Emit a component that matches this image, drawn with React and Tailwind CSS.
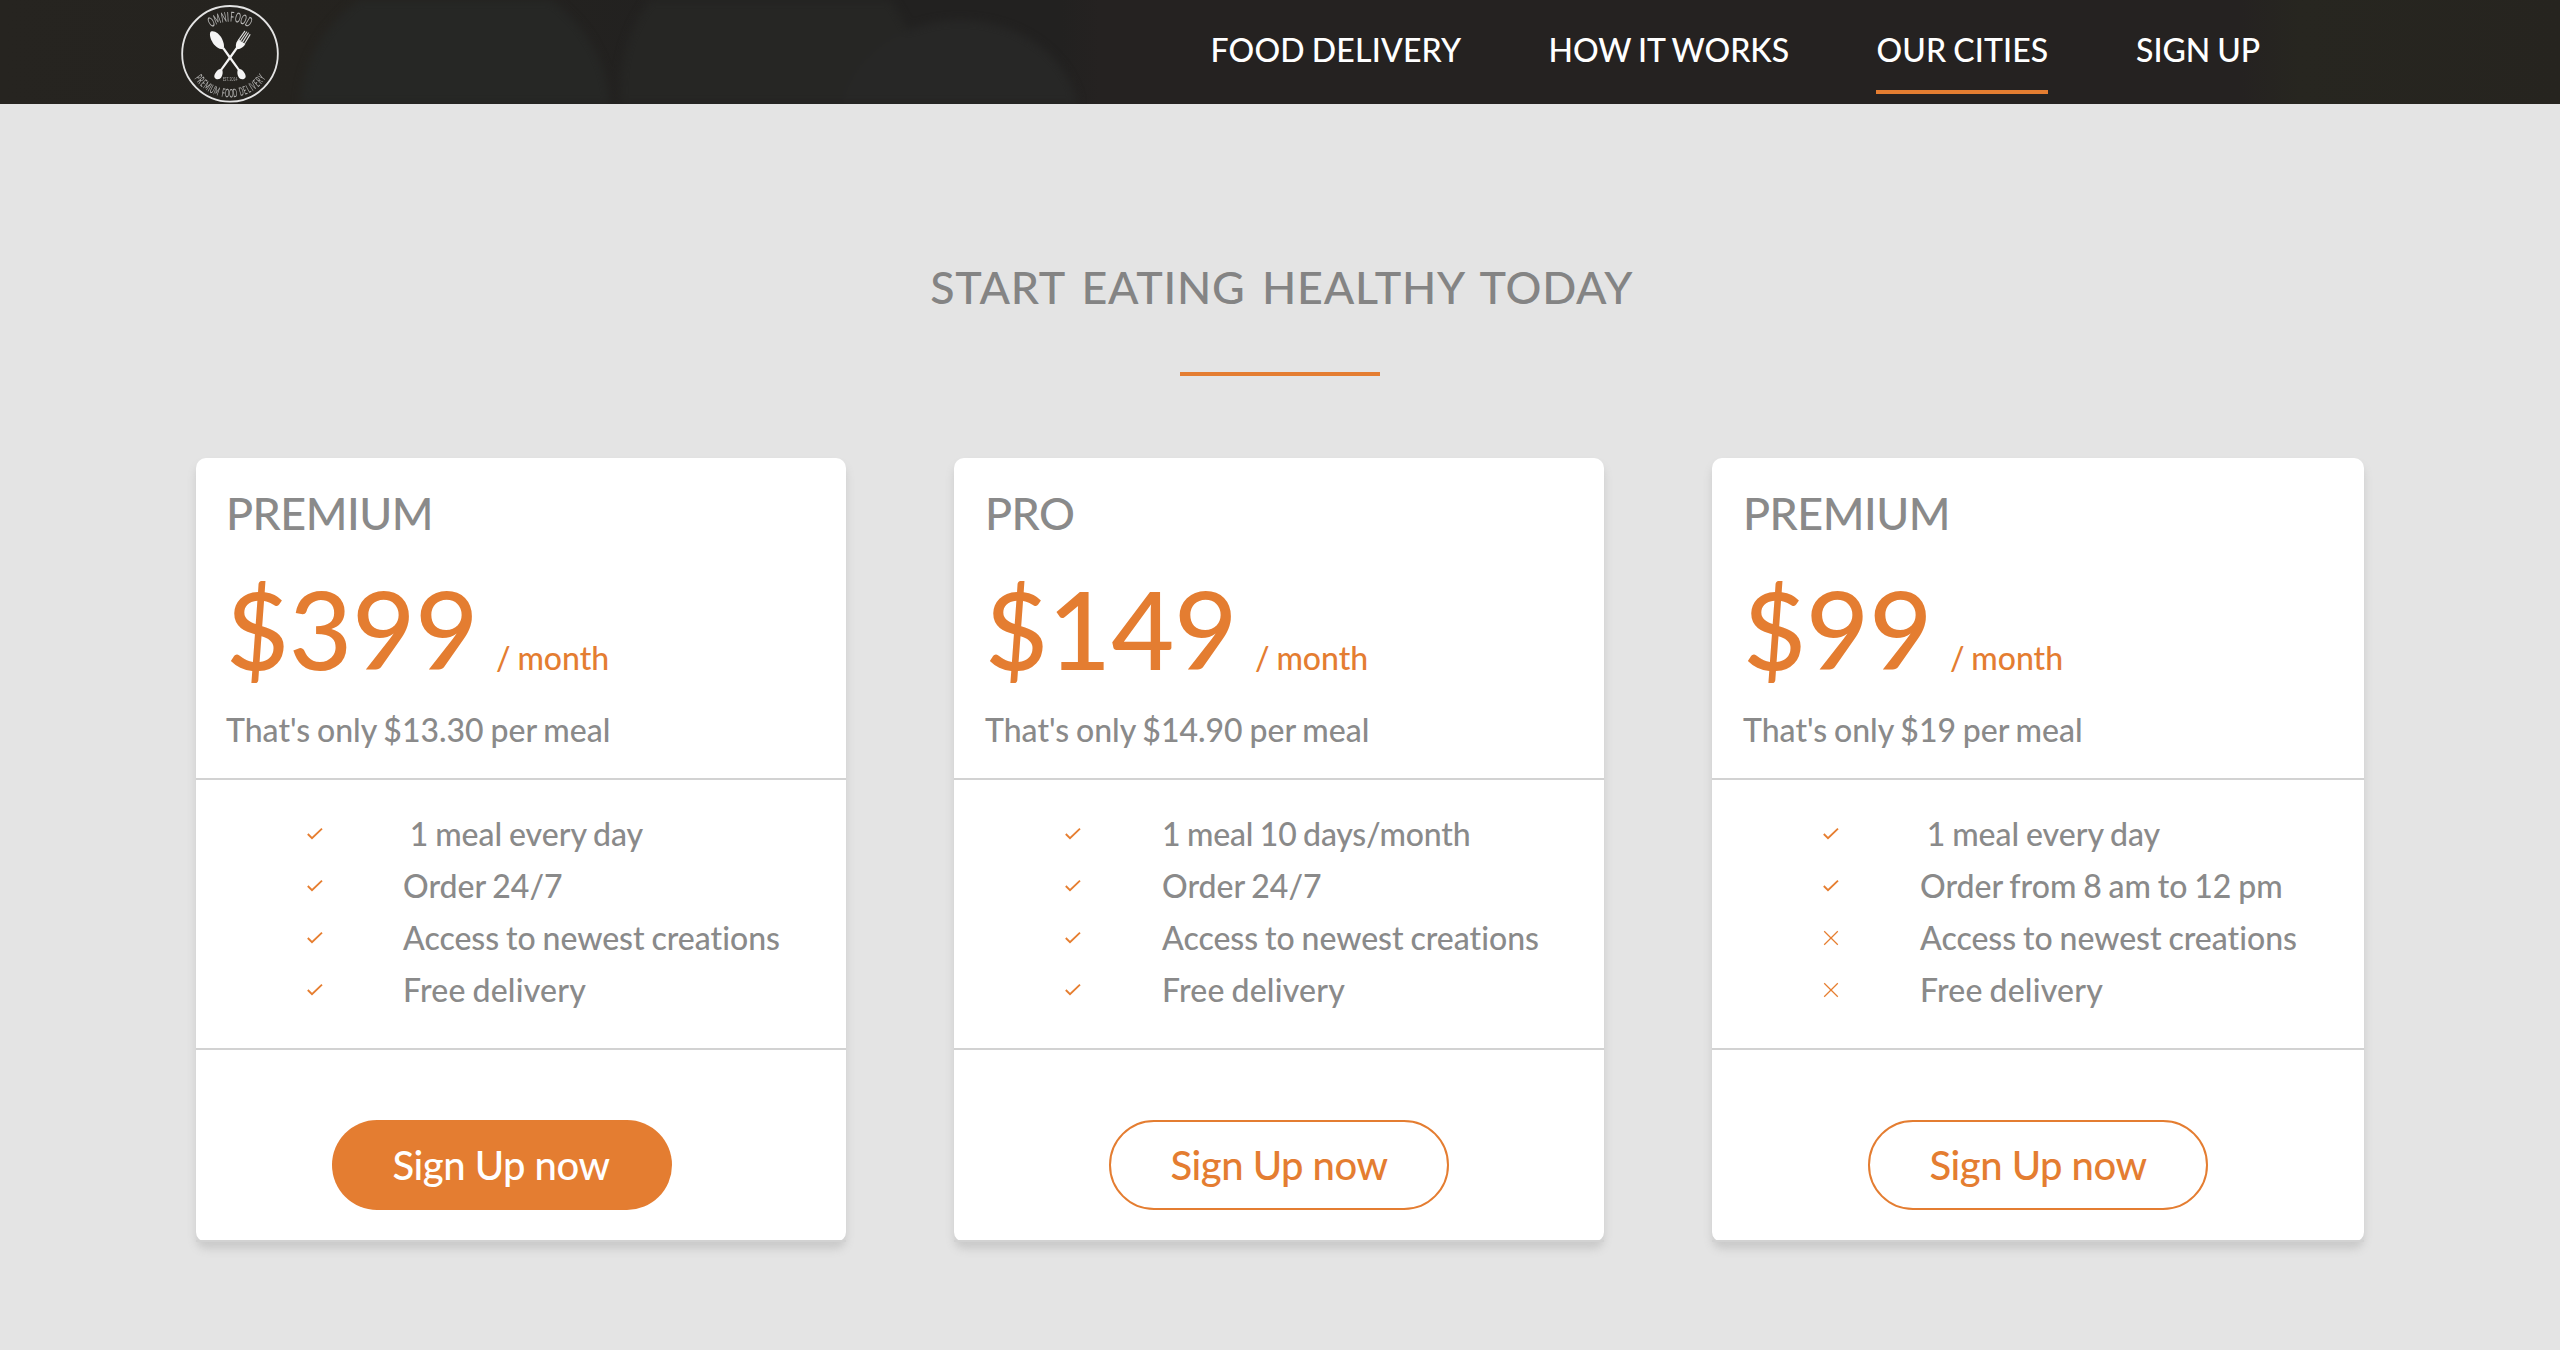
import React from "react";

const NAV = [
  { label: "FOOD DELIVERY", box: "w-[249px] tracking-[0.19px]" },
  { label: "HOW IT WORKS", box: "w-[240.5px] pl-[1px]" },
  { label: "OUR CITIES", box: "w-[172px] pl-[0.5px] tracking-[0.12px]", active: true },
  { label: "SIGN UP", box: "w-[125px]" },
];

const PLANS = [
  {
    name: "PREMIUM",
    price: "$399",
    note: "That's only $13.30 per meal",
    features: [
      ["\u00a01 meal every day", true],
      ["Order 24/7", true],
      ["Access to newest creations", true],
      ["Free delivery", true],
    ],
    inset: "px-[30px]",
    markGap: "mr-[79px]",
    filled: true,
  },
  {
    name: "PRO",
    price: "$149",
    note: "That's only $14.90 per meal",
    features: [
      ["1 meal 10 days/month", true, "tracking-[-0.2px]"],
      ["Order 24/7", true],
      ["Access to newest creations", true],
      ["Free delivery", true],
    ],
    inset: "px-[31px]",
    markGap: "mr-[80px]",
  },
  {
    name: "PREMIUM",
    price: "$99",
    note: "That's only $19 per meal",
    features: [
      ["\u00a01 meal every day", true],
      ["Order from 8 am to 12 pm", true],
      ["Access to newest creations", false],
      ["Free delivery", false],
    ],
    inset: "px-[31px]",
    markGap: "mr-[80px]",
  },
];

const GLYPH_WIDTH = { I: 0.5, M: 1.3, " ": 0.6 };

// Letters spread along a circle; "span" is the total angle in degrees.
function ArcText({ text, span, radius, size, squeeze, below }) {
  const widths = [...text].map((ch) => GLYPH_WIDTH[ch] || 1);
  const total = widths.reduce((a, b) => a + b, 0);
  let passed = 0;
  return [...text].map((ch, i) => {
    const at = (passed + widths[i] / 2) / total - 0.5;
    passed += widths[i];
    const angle = at * span * (below ? -1 : 1);
    const y = below ? radius : -radius;
    return (
      <text
        key={i}
        fontSize={size}
        textAnchor="middle"
        transform={`translate(210 162) rotate(${angle}) translate(0 ${y}) scale(${squeeze} 1)`}
      >
        {ch}
      </text>
    );
  });
}

function Logo() {
  return (
    <svg viewBox="60 12 300 300" className="size-[100px]" fill="#f4f4f4" fontFamily="Lato, sans-serif" fontWeight="400">
      <circle cx="210" cy="161.5" r="143.5" fill="none" stroke="#e4e4e4" strokeWidth="5.5" />
      <g opacity="0.72">
        <ArcText text="OMNIFOOD" span={70} radius={97} size={41} squeeze={0.5} />
        <ArcText text="PREMIUM FOOD DELIVERY" span={113} radius={130} size={35} squeeze={0.46} below />
      </g>
      <path d="M152 95 C162 90 178 100 186 116 C191 127 194 138 191 145 L188 148 C177 148 162 138 156 124 C150 112 148 100 152 95 Z" />
      <path d="M186 145 L192 142 L213 171 L238 206 C248 208 258 221 257 231 C254 240 240 240 236 232 C232 225 231 218 233 210 L207 175 Z" />
      <path d="M234 145 L228 142 L207 171 L182 206 C172 208 162 221 163 231 C166 240 180 240 184 232 C188 225 189 218 187 210 L213 175 Z" />
      <path d="M228 144 C226 132 230 124 236 118 L243 124 L256 132 C252 140 242 147 233 148 Z" />
      <path
        d="M235 121 L254 94 M241 124 L260 96 M247 128 L265 99 M253 132 L270 104"
        fill="none"
        stroke="#dcdcdc"
        strokeWidth="3.4"
        strokeLinecap="round"
      />
      <text x="210" y="242" fontSize="17" textAnchor="middle" textLength="44" lengthAdjust="spacingAndGlyphs" opacity="0.6">
        EST. 2014
      </text>
    </svg>
  );
}

function Mark({ ok }) {
  return (
    <svg viewBox="0 0 18 18" className="size-[18px]" fill="none" stroke="#e67e30">
      {ok ? (
        <path d="M1.8 9 L6 13.1 L16 3.6" strokeWidth="1.9" />
      ) : (
        <path d="M2.2 2.2 L15.8 15.8 M15.8 2.2 L2.2 15.8" strokeWidth="1.25" />
      )}
    </svg>
  );
}

function Plan({ plan }) {
  return (
    <article className="h-[784px] rounded-[10px] bg-white shadow-[0_7px_8px_#cacaca]">
      <div className={"h-[322px] border-b-2 border-[#d2d2d2] pt-[25px] " + plan.inset}>
        <h3 className="text-[44.8px] leading-[60px] tracking-[-0.5px]">{plan.name}</h3>
        <p className="mt-[25px] flex items-baseline whitespace-nowrap text-[#e47d31]">
          <span className="text-[108.8px] leading-[120px]">{plan.price}</span>
          <span className="ml-[17.6px]">/ month</span>
        </p>
        <p className="mt-[18px] leading-[48px]">{plan.note}</p>
      </div>
      <ul className="h-[270px] border-b-2 border-[#d2d2d2] pt-[28px]">
        {plan.features.map(([label, ok, spacing]) => (
          <li key={label} className="flex h-[52px] items-center leading-[52px] last:tracking-[0.2px]">
            <span className={"ml-[110px] " + plan.markGap}>
              <Mark ok={ok} />
            </span>
            <span className={"whitespace-nowrap " + (spacing || "")}>{label}</span>
          </li>
        ))}
      </ul>
      <div className="flex h-[192px] justify-center border-b-2 border-[#d2d2d2] pt-[70px]">
        <button
          className={
            plan.filled
              ? "mr-[38px] h-[90px] w-[340px] rounded-full bg-[#e47d31] pr-[2px] text-[40px] leading-[86px] tracking-[-0.5px] text-white"
              : "h-[90px] w-[340px] rounded-full border-2 border-[#e47d31] text-[40px] leading-[82px] tracking-[-0.5px] text-[#e47d31]"
          }
        >
          Sign Up now
        </button>
      </div>
    </article>
  );
}

export default function App() {
  return (
    <div className="h-[1350px] w-[2560px] overflow-hidden bg-[#e4e4e4] font-['Lato',sans-serif] text-[32px] font-medium text-[#8a8a8a] [word-spacing:-0.04em] [font-variant-ligatures:none]">
      <header className="relative flex h-[104px] justify-between overflow-hidden bg-[linear-gradient(90deg,#262420_0px,#25231f_300px,#222120_700px,#222120_1060px,#252221_1100px,#252221_2240px,#272620_2300px,#26241f_2560px)] pl-[180px] pr-[299px] text-white">
        <svg viewBox="0 0 2560 104" className="absolute inset-0 h-[104px] w-[2560px] blur-[4px]">
          <ellipse cx="455" cy="110" rx="155" ry="140" fill="#262725" />
          <ellipse cx="770" cy="90" rx="150" ry="150" fill="#262624" />
          <ellipse cx="960" cy="122" rx="120" ry="102" fill="#272726" />
        </svg>
        <div className="relative pt-1">
          <Logo />
        </div>
        <nav className="relative flex gap-[88px] pt-[26px]">
          {NAV.map((item) => (
            <a key={item.label} className={item.box + " h-[68px] whitespace-nowrap leading-[48px]" + (item.active ? " border-b-4 border-[#e47d31]" : "")}>
              {item.label}
            </a>
          ))}
        </nav>
      </header>
      <main className="flex flex-col items-center pt-[153px]">
        <h2 className="whitespace-nowrap pl-[3.4px] text-[44.8px] leading-[60px] tracking-[0.75px] text-[#848484] [word-spacing:4.6px]">
          START EATING HEALTHY TODAY
        </h2>
        <div className="mt-[55px] h-1 w-[200px] bg-[#e47d31]" />
        <section className="mt-[82px] grid w-[2168px] grid-cols-[650px_650px_652px] gap-[108px]">
          {PLANS.map((plan, i) => (
            <Plan key={i} plan={plan} />
          ))}
        </section>
      </main>
    </div>
  );
}
